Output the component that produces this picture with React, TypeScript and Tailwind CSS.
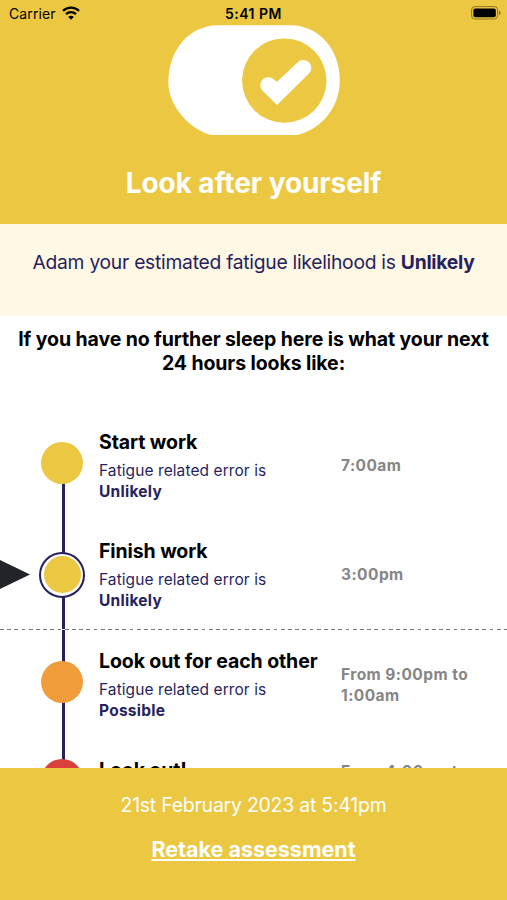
import clsx from "clsx";

type Step = {
  title: string;
  level: string;
  time: string;
  dot: string;
  row: string;
  current?: boolean;
};

const steps: Step[] = [
  { title: "Start work", level: "Unlikely", time: "7:00am", dot: "bg-[#ecc742]", row: "h-[109px]" },
  { title: "Finish work", level: "Unlikely", time: "3:00pm", dot: "bg-[#ecc742]", row: "h-[110px]", current: true },
  { title: "Look out for each other", level: "Possible", time: "From 9:00pm to 1:00am", dot: "bg-[#f09c3a]", row: "h-[109px]" },
  { title: "Look out!", level: "Likely", time: "From 4:00am to 7:00am", dot: "bg-[#d9413a]", row: "h-[88px]" },
];

const StatusBar = () => {
  return (
    <div className="grid h-[25px] grid-cols-3 items-center px-[9px] pt-[2px] text-[14px] text-black">
      <div className="flex items-center gap-[6px]">
        <span className="tracking-[0.1px]">Carrier</span>
        <svg className="-mt-[2px]" width="18" height="14" viewBox="0 0 18 14" fill="none" stroke="black" strokeWidth="2.3">
          <path d="M1 4.9C5.4.6 12.6.6 17 4.9" />
          <path d="M4 8.1c2.8-2.7 7.2-2.7 10 0" />
          <path d="M9 13.8l-2.8-2.9c1.5-1.5 4.1-1.5 5.6 0z" fill="black" stroke="none" />
        </svg>
      </div>
      <span className="text-center font-semibold tracking-[0.5px]">5:41 PM</span>
      <svg className="-mt-px -mr-[3px] justify-self-end" width="30" height="14" viewBox="0 0 30 14">
        <rect x=".6" y=".6" width="26" height="12.4" rx="3.2" fill="none" stroke="black" strokeOpacity=".4" />
        <rect x="2.4" y="2.4" width="22.4" height="8.8" rx="1.8" />
        <path d="M28 4.7c2 .6 2 3.6 0 4.2z" fillOpacity=".45" />
      </svg>
    </div>
  );
};

const ToggleLogo = () => {
  return (
    <svg className="mx-auto block" width="172" height="110" viewBox="168 25 172 110">
      <path
        fill="white"
        d="M216 25.3H293C321 27 339.8 51 339.8 80.5C339.8 107 322 129 297 135H211C189 129 168.3 106 168.3 82C168.3 52 187 27 216 25.3Z"
      />
      <circle cx="284.3" cy="80.6" r="42.2" fill="#ecc742" />
      <path
        fill="white"
        d="M277 105L262.4 90.6A8 8 0 0 1 273.7 79.3L277 81.8L297.5 62.4A8 8 0 0 1 309 73.6Z"
      />
    </svg>
  );
};

const StepRow = ({ step, last }: { step: Step; last: boolean }) => {
  return (
    <div className={clsx("relative flex", step.row)}>
      {!last && <div className="absolute top-[33px] left-[62px] h-full w-[2.5px] bg-[#271f5e]" />}
      <div className="flex w-[99px] shrink-0 pl-[39px]">
        {step.current ? (
          <div className="relative mt-[12.5px] flex size-[46px] items-center justify-center rounded-full border-[2.5px] border-[#271f5e] bg-white">
            <div className={clsx("size-[37px] rounded-full", step.dot)} />
          </div>
        ) : (
          <div className={clsx("relative ml-[2px] size-[42px] rounded-full", last ? "mt-[1px]" : "mt-[12px]", step.dot)} />
        )}
      </div>
      <div className="w-[242px] shrink-0">
        <h3 className="text-[19.5px] leading-[24px] font-bold tracking-[-0.1px] whitespace-nowrap text-black">{step.title}</h3>
        <p className="mt-[6px] w-[190px] text-[15.5px] leading-[21px] tracking-[0.08px] text-[#271f5e]">
          Fatigue related error is <b className="block tracking-[0.25px]">{step.level}</b>
        </p>
      </div>
      <div
        className={clsx(
          "flex w-[140px] items-center text-[15.5px] leading-[21px] font-bold tracking-[0.45px] text-[#858585]",
          last ? "h-[48px]" : "h-[71px]",
        )}
      >
        {step.time}
      </div>
    </div>
  );
};

const App = () => {
  return (
    <div className="flex h-[900px] w-[507px] flex-col overflow-hidden bg-white font-['Inter',sans-serif]">
      <header className="h-[224px] shrink-0 bg-[#ecc742]">
        <StatusBar />
        <ToggleLogo />
        <h1 className="mt-[30px] text-center text-[28px] leading-[36px] font-bold tracking-[-0.1px] text-white">Look after yourself</h1>
      </header>

      <section className="h-[92px] shrink-0 bg-[#fff8e5] pt-[25px] text-center text-[19.3px] leading-[26px] tracking-[-0.27px] text-[#271f5e]">
        Adam your estimated fatigue likelihood is <b>Unlikely</b>
      </section>

      <main className="min-h-0 flex-1 overflow-hidden pt-[11px]">
        <h2 className="text-center text-[19.5px] leading-[24px] font-bold tracking-[-0.1px] text-black">
          If you have no further sleep here is what your next
          <br />
          24 hours looks like:
        </h2>
        <div className="relative mt-[55px]">
          {steps.map((step, i) => (
            <StepRow key={step.title} step={step} last={i === steps.length - 1} />
          ))}
          {/* where the reader is now */}
          <div className="absolute top-[130px] left-0 h-[29px] w-[30px] bg-[#212529] [clip-path:polygon(0_0,100%_50%,0_100%)]" />
          <div className="absolute top-[199px] left-0 h-px w-full bg-[repeating-linear-gradient(90deg,#777_0_3.8px,#fff_3.8px_7.2px)]" />
        </div>
      </main>

      <footer className="h-[132px] shrink-0 bg-[#ecc742] pt-[24px] text-center text-white">
        <p className="text-[19.5px] leading-[26px] tracking-[-0.25px]">21st February 2023 at 5:41pm</p>
        <a href="#" className="mt-[17px] inline-block text-[21.5px] leading-[28px] font-bold underline">
          Retake assessment
        </a>
      </footer>
    </div>
  );
};

export default App;
